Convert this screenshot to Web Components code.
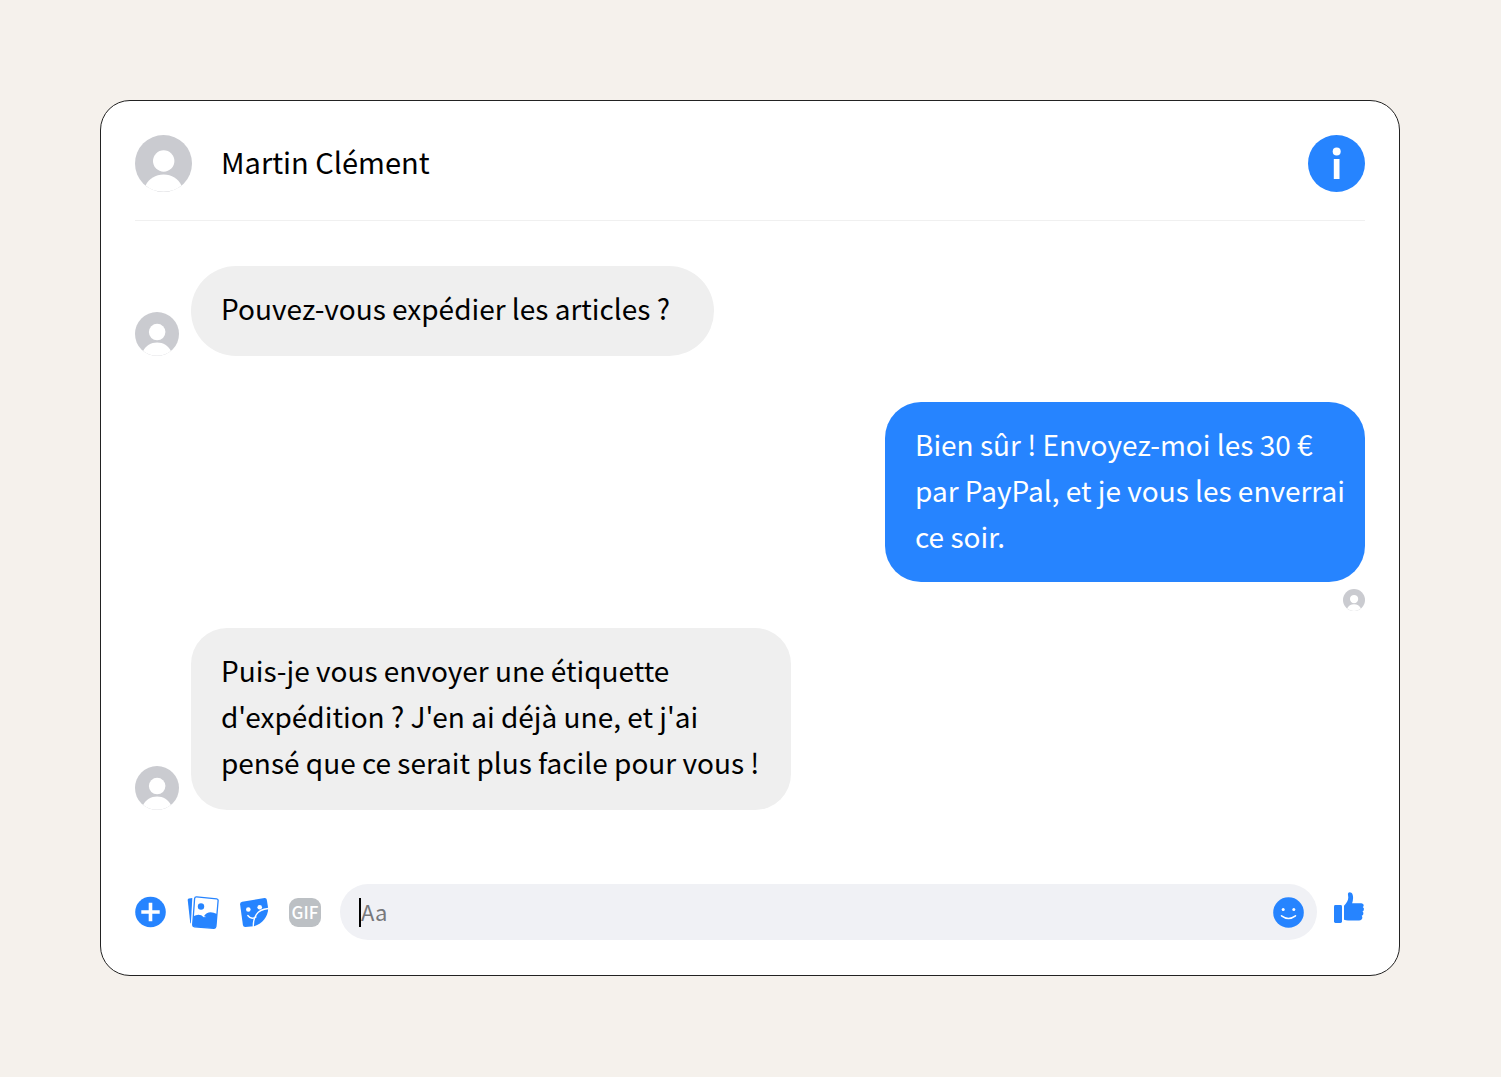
<!DOCTYPE html>
<html lang="fr">
<head>
<meta charset="utf-8">
<meta name="viewport" content="width=device-width, initial-scale=1">
<title>Martin Clément</title>
<style>
  body {
    margin: 0;
    background: #f5f1ec;
    color: #000;
    font: 29px/46px "Noto Sans CJK SC", "Noto Sans", sans-serif;
    --chat-accent: #2684ff;
    --chat-muted: #cacbd0;
  }
</style>
</head>
<body>
<chat-window>
  <chat-header slot="header">Martin Clément</chat-header>
  <chat-message single>Pouvez-vous expédier les articles ?</chat-message>
  <chat-message outgoing>Bien sûr ! Envoyez-moi les 30 € par PayPal, et je vous les enverrai ce soir.</chat-message>
  <chat-message>Puis-je vous envoyer une étiquette d'expédition ? J'en ai déjà une, et j'ai pensé que ce serait plus facile pour vous !</chat-message>
  <chat-composer slot="footer"></chat-composer>
</chat-window>

<script>
function template(html) {
  const t = document.createElement('template');
  t.innerHTML = html;
  return t;
}

function define(name, tpl) {
  customElements.define(name, class extends HTMLElement {
    constructor() {
      super();
      this.attachShadow({ mode: 'open' }).appendChild(tpl.content.cloneNode(true));
    }
  });
}

define('chat-avatar', template(`
  <style>
    :host { display: block; flex: none; width: var(--chat-avatar-size, 44px); height: var(--chat-avatar-size, 44px); }
    svg { display: block; width: 100%; height: 100%; }
    .disc { fill: var(--chat-muted, #cacbd0); }
    .person { fill: #fff; }
  </style>
  <svg viewBox="0 0 57 57" aria-hidden="true">
    <circle class="disc" cx="28.5" cy="28.5" r="28.5"/>
    <circle class="person" cx="28.7" cy="26" r="10.7"/>
    <path class="person" d="M10.5 50.5C14 43.5 20.5 39.5 28.7 39.5S43 43.5 46.5 50.5C41.5 54.7 35.5 56.7 28.5 56.7S15.5 54.7 10.5 50.5Z"/>
  </svg>
`));

define('chat-window', template(`
  <style>
    :host { display: block; margin: 100px 101px 100px 100px; }
    section {
      padding: 34px 34px 35px;
      background: #fff;
      border: 1px solid #222;
      border-radius: 30px;
    }
    .messages { display: flex; flex-direction: column; padding: 45px 0 74px; }
  </style>
  <section>
    <slot name="header"></slot>
    <div class="messages"><slot></slot></div>
    <slot name="footer"></slot>
  </section>
`));

define('chat-header', template(`
  <style>
    :host {
      display: flex;
      align-items: center;
      gap: 29px;
      padding-bottom: 28px;
      border-bottom: 1px solid #f0f0f0;
      --chat-avatar-size: 57px;
    }
    h1 { flex: 1; margin: 0; padding-bottom: 6px; font: inherit; }
    button { width: 57px; height: 57px; padding: 0; border: 0; background: none; cursor: pointer; }
    svg { display: block; }
  </style>
  <chat-avatar></chat-avatar>
  <h1><slot></slot></h1>
  <button type="button" aria-label="Informations">
    <svg width="57" height="57" viewBox="0 0 57 57">
      <circle cx="28.5" cy="28.5" r="28.5" fill="var(--chat-accent)"/>
      <circle cx="28.7" cy="16.5" r="4" fill="#fff"/>
      <path d="M25.8 24h5.7v20h-5.7z" fill="#fff"/>
    </svg>
  </button>
`));

define('chat-message', template(`
  <style>
    :host { display: flex; align-items: flex-end; gap: 12px; margin-bottom: 46px; font-size: 28px; }
    :host(:last-of-type) { margin-bottom: 0; }
    .bubble {
      box-sizing: border-box;
      max-width: 600px;
      margin: 0;
      padding: 19px 10px 25px 30px;
      background: #efefef;
      border-radius: 36px;
    }
    :host([single]) .bubble { padding-right: 44px; border-radius: 45px; }
    :host([outgoing]) {
      flex-direction: column-reverse;
      gap: 7px;
      margin-bottom: 17px;
      --chat-avatar-size: 22px;
    }
    :host([outgoing]) .bubble {
      max-width: 480px;
      padding-bottom: 23px;
      background: var(--chat-accent);
      color: #fff;
    }
  </style>
  <chat-avatar></chat-avatar>
  <p class="bubble"><slot></slot></p>
`));

define('chat-composer', template(`
  <style>
    :host { display: flex; align-items: center; }
    button { flex: none; padding: 0; border: 0; background: none; color: inherit; cursor: pointer; }
    svg { display: block; fill: var(--chat-accent); }
    .tools { display: flex; align-items: center; gap: 20px; margin-right: 19px; }
    .gif {
      width: 32px;
      height: 29px;
      border-radius: 9px;
      background: #bcc0c4;
      color: #fff;
      font: 500 17px/28px "Noto Sans CJK SC", sans-serif;
    }
    .field {
      flex: 1;
      display: flex;
      align-items: center;
      min-width: 0;
      height: 56px;
      box-sizing: border-box;
      padding: 0 13px 0 19px;
      border-radius: 28px;
      background: #f0f1f5;
    }
    .caret { width: 2px; height: 29px; background: #000; }
    input {
      flex: 1;
      min-width: 0;
      padding: 0 0 2px;
      border: 0;
      outline: 0;
      background: none;
      color: #000;
      font: 22px/32px "Noto Sans CJK SC", sans-serif;
    }
    input::placeholder { color: #77787b; opacity: 1; }
    .like { margin: 0 0 8px 16px; }
  </style>
  <div class="tools">
    <button type="button" aria-label="Ajouter">
      <svg width="32" height="32" viewBox="0 0 32 32">
        <circle cx="15.5" cy="16" r="15.3"/>
        <path d="M6.3 16h18.4M15.5 6.8v18.4" stroke="#fff" stroke-width="3.6"/>
      </svg>
    </button>
    <button type="button" aria-label="Photos">
      <svg width="32" height="34" viewBox="0 0 32 34">
        <path d="M1.9 3.5 5.3 3.1 3.9 28.5Q3.4 28.3 3.2 27.4L.7 5Q.6 3.7 1.9 3.5Z"/>
        <path d="M9.6 1.9 29.6 3.8Q31.3 4 31.1 5.7L28.9 31.5Q28.7 33.4 26.9 33.3L7.5 31.8Q5.6 31.6 5.7 29.8L7.6 3.6Q7.8 1.8 9.6 1.9Z" fill="#fff" stroke="var(--chat-accent)" stroke-width="1.3"/>
        <circle cx="14" cy="11.5" r="3.2"/>
        <path d="M6.3 21.3Q12.5 17.8 16.8 22.2Q18.3 21.8 19.3 22.3Q17.7 21 16.9 21.2Q21 14.8 30 19L28.9 31.5Q28.7 33.4 26.9 33.3L7.5 31.8Q5.6 31.6 5.7 29.8Z"/>
      </svg>
    </button>
    <button type="button" aria-label="Autocollants">
      <svg width="30" height="32" viewBox="0 0 30 32">
        <path d="M3.2 5.8 25.5 2.1Q27.5 1.9 27.8 3.7L29 11.2C30 18.5 24.5 27.5 14.8 30.2L6.3 31Q4.3 31.1 3.9 29L1.1 8.4Q.9 6.2 3.2 5.8Z"/>
        <circle cx="9.3" cy="13.5" r="2.3" fill="#fff"/>
        <circle cx="20.7" cy="11.2" r="2.3" fill="#fff"/>
        <path d="M29.2 12.5Q20.5 13.5 17.3 18.6T14.3 30.5M8.8 19.5Q12 24 17 21" fill="none" stroke="#fff" stroke-width="1.3" stroke-linecap="round"/>
      </svg>
    </button>
    <button class="gif" type="button">GIF</button>
  </div>
  <div class="field">
    <span class="caret"></span>
    <input type="text" placeholder="Aa" aria-label="Message">
    <button type="button" aria-label="Emoji">
      <svg width="31" height="31" viewBox="0 0 31 31">
        <circle cx="15.5" cy="15.5" r="15.3"/>
        <circle cx="10.2" cy="12.5" r="1.5" fill="#fff"/>
        <circle cx="20.8" cy="12.5" r="1.5" fill="#fff"/>
        <path d="M8.5 18.8Q15.5 24 22.5 18.8" fill="none" stroke="#fff" stroke-width="1.5" stroke-linecap="round"/>
      </svg>
    </button>
  </div>
  <button class="like" type="button" aria-label="J'aime">
    <svg width="32" height="32" viewBox="0 0 32 32">
      <rect x="1" y="13" width="8" height="18" rx="1.4"/>
      <path d="M11 13.7C13.6 11 15.2 8.7 15.3 5.500L14.900 1.900Q14.900.2 16.700.2C19.300.3 20.200 3 20.100 6Q20 8.600 19.100 11.200H28.400Q30.900 11.400 30.700 13.500Q30.600 14.600 29.700 15.100Q31.500 16.200 30.800 18Q30.500 19.200 29.500 19.500Q31 20.700 30.200 22.500Q29.800 23.500 28.700 23.800Q29.700 25 29.200 26.500Q28.500 28.500 26.200 28.500H15Q13 28.500 11 27.700Z"/>
    </svg>
  </button>
`));
</script>
</body>
</html>
